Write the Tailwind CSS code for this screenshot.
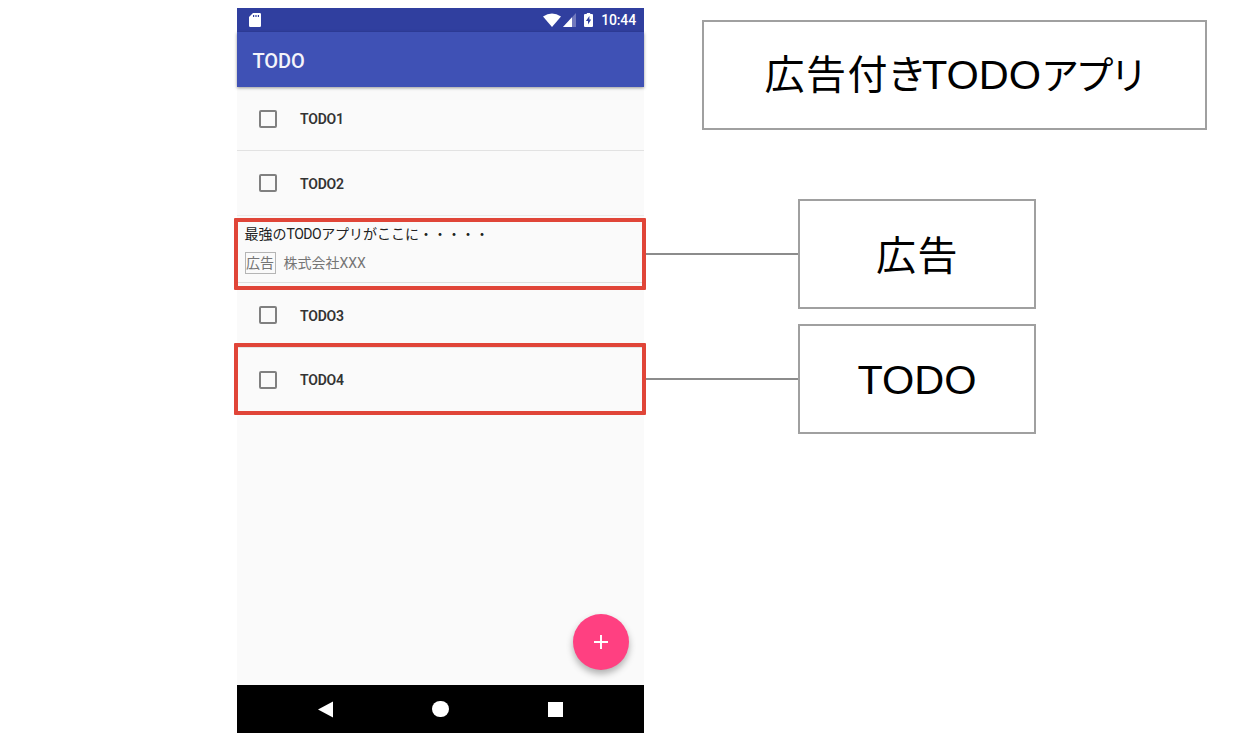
<!DOCTYPE html>
<html lang="ja">
<head>
<meta charset="utf-8">
<title>TODO</title>
<script src="https://cdn.jsdelivr.net/npm/@tailwindcss/browser@4"></script>
</head>
<body class="bg-white">
<div class="relative flex h-[750px] w-[1243px] items-start overflow-hidden pl-[236.5px] pt-[8px] font-['Roboto','Noto_Sans_CJK_JP',sans-serif]">
  <main class="relative flex h-[725px] w-[407.5px] shrink-0 flex-col bg-[#fafafa]">
    <div class="flex h-6 shrink-0 items-center bg-[#303f9f] pl-[12px] pr-[8px] text-white">
      <svg class="h-[14px] w-[12px]" viewBox="0 0 12 14" fill="white"><path fill-rule="evenodd" d="M4 0H10.800Q12 0 12 1.200V12.800Q12 14 10.800 14H1.200Q0 14 0 12.800V4ZM4 2V4H5.200V2ZM6.400 2V4H7.600V2ZM8.800 2V4H10V2Z"/></svg>
      <svg class="ml-auto h-[14px] w-[18px]" viewBox="0 0 18 14" fill="white"><path d="M0 3.500Q9-2.500 18 3.500L9 14Z"/></svg>
      <svg class="ml-[2px] h-[14px] w-[13px]" viewBox="0 0 13 14"><path d="M13 0V14H0Z" fill="#7179bd"/><path d="M9 4.300V14H0Z" fill="white"/></svg>
      <svg class="ml-[8px] h-[14px] w-[9px]" viewBox="0 0 9 14" fill="white"><path fill-rule="evenodd" d="M2.800 0H6.200V1H8Q9 1 9 2V13Q9 14 8 14H1Q0 14 0 13V2Q0 1 1 1H2.800ZM5.400 3L1.900 7.900H4V11.500L7.200 6.500H5.400Z"/></svg>
      <span class="ml-[8px] text-[14px] font-medium leading-6 tracking-[-0.15px]">10:44</span>
    </div>
    <header class="z-10 flex h-[55px] shrink-0 items-center bg-[#3f51b5] pl-[16px] pt-[2px] text-[20px] font-medium tracking-[-0.1px] text-[#f4f4fa] shadow-[0_1px_3px_rgba(0,0,0,0.4)]"><h1>TODO</h1></header>
    <ul class="flex flex-col text-[14px] font-semibold tracking-[-0.2px] text-[#333]">
      <li class="flex h-[64px] items-center border-b border-[#e2e2e2] pl-[22px]"><span class="size-[18px] rounded-[2px] border-2 border-[#808080]"></span><span class="ml-[23.500px] pt-[2px]">TODO1</span></li>
      <li class="flex h-[65px] items-center border-b border-[#ececec] pl-[22px]"><span class="size-[18px] rounded-[2px] border-2 border-[#808080]"></span><span class="ml-[23.500px] pt-[2px]">TODO2</span></li>
      <li class="flex h-[67px] flex-col border-b border-[#dedede] pl-[8px] pt-[7px] font-normal tracking-normal">
        <p class="h-[22px] whitespace-nowrap text-[14px] leading-[22px] text-[#222]">最強の<span class="tracking-[-0.5px]">TODO</span>アプリがここに・・・・・</p>
        <div class="mt-[7px] flex items-center text-[14px] leading-[20px] text-[#757575]"><span class="flex h-[22px] w-[31px] items-center justify-center border border-[#b5b5b5]">広告</span><span class="ml-[8px]">株式会社XXX</span></div>
      </li>
      <li class="flex h-[65px] items-center border-b border-[#e4e4e4] pl-[22px]"><span class="size-[18px] rounded-[2px] border-2 border-[#808080]"></span><span class="ml-[23.500px] pt-[2px]">TODO3</span></li>
      <li class="flex h-[64.500px] items-center pl-[22px]"><span class="size-[18px] rounded-[2px] border-2 border-[#808080]"></span><span class="ml-[23.500px]">TODO4</span></li>
    </ul>
    <button class="mb-[15px] ml-auto mr-[15px] mt-auto flex size-[56px] shrink-0 items-center justify-center rounded-full bg-[#ff4081] shadow-[0_4px_7px_rgba(0,0,0,0.3)]">
      <svg class="size-[14px]" viewBox="0 0 14 14" stroke="white" stroke-width="1.900"><path d="M7 0V14M0 7H14"/></svg>
    </button>
    <nav class="flex h-[48px] shrink-0 items-center bg-black pl-[81.500px]">
      <svg class="h-[17px] w-[15px]" viewBox="0 0 15 17" fill="white"><path d="M15 .5V16.500L0 8.500Z"/></svg>
      <span class="ml-[99px] size-[16.500px] rounded-full bg-white"></span>
      <span class="ml-[99px] size-[15px] bg-white"></span>
    </nav>
    <div class="absolute left-[-2.500px] top-[210px] h-[72px] w-[412px] rounded-[1px] border-4 border-[#e04538]"></div>
    <div class="absolute left-[-2.500px] top-[335.400px] h-[71.500px] w-[412px] rounded-[1px] border-4 border-[#e04538]"></div>
  </main>
  <aside class="ml-[1px] flex w-[562px] flex-col pt-[12px] font-['Liberation_Sans','Noto_Sans_CJK_JP',sans-serif] text-[41.500px] text-black">
    <h2 class="ml-[57px] flex h-[110px] w-[505px] items-center justify-center whitespace-nowrap border-2 border-[#a0a0a0]"><span class="pt-[1px] leading-[50px]"><span class="text-[40px] tracking-[1.500px]">広告付</span><span class="ml-[-2px] mr-[-1px] text-[40px] tracking-[-4px]">き</span>TODO<span class="text-[38px] tracking-[-3.500px]">アプリ</span></span></h2>
    <div class="mt-[69px] flex items-center"><span class="h-[2px] w-[153px] bg-[#8c8c8c]"></span><div class="flex h-[110px] w-[238px] items-center justify-center border-2 border-[#a0a0a0] pl-[1px] pt-[3px] text-[40px] leading-[50px] tracking-[1.500px]">広告</div></div>
    <div class="mt-[15px] flex items-center"><span class="h-[2px] w-[153px] bg-[#8c8c8c]"></span><div class="flex h-[110px] w-[238px] items-center justify-center border-2 border-[#a0a0a0] pt-[2px] leading-[50px]">TODO</div></div>
  </aside>
</div>
</body>
</html>
